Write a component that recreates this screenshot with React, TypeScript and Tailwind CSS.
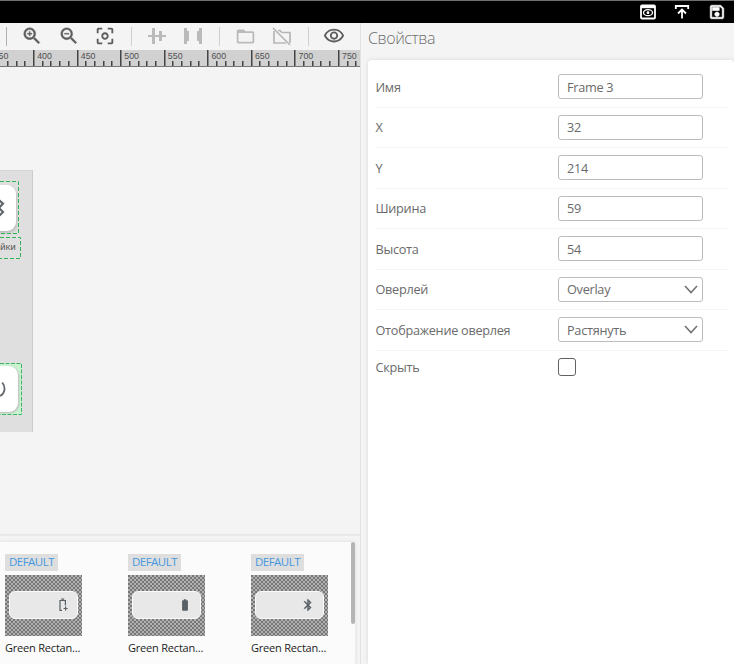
import React from 'react';
import { MdZoomIn, MdZoomOut, MdCenterFocusWeak, MdFolderOpen, MdOutlineVisibility, MdOutlineSave, MdBatteryFull, MdBluetooth } from 'react-icons/md';

const rulerMarks = [350, 400, 450, 500, 550, 600, 650, 700, 750];

function Ruler() {
  return (
    <svg className="block h-[17px] w-[360px] shrink-0 bg-[#d1d1d1]" viewBox="0 0 360 17">
      {rulerMarks.map((mark, i) => {
        const x = 34 + (i - 1) * 43.55;
        return (
          <g key={mark}>
            <rect x={Math.round(x) - 1} y="0" width="1.5" height="17" fill="#444" />
            {[1, 2, 3, 4].map((n) => (
              <rect key={n} x={Math.round(x + n * 8.7) - 1} y="11" width="1.5" height="6" fill="#444" />
            ))}
            <text x={x + 3.2} y="9" fontSize="8.8" fontFamily="Liberation Sans, Arial, sans-serif" fill="#505050">{mark}</text>
          </g>
        );
      })}
      <rect x="0" y="16" width="360" height="1" fill="#777" />
    </svg>
  );
}

function Separator() {
  return <div className="h-[19px] w-px shrink-0 bg-[#cfcfcf]" />;
}

function Toolbar() {
  return (
    <div className="flex h-[27px] shrink-0 items-center pb-px pl-[6px] text-[#5c5c5c]">
      <div className="h-[19px] w-px bg-[#b0b0b0]" />
      <MdZoomIn className="ml-[14px] size-[22px] stroke-current stroke-[0.5] [&>path:first-child]:stroke-none" />
      <MdZoomOut className="ml-[15px] size-[22px] stroke-current stroke-[0.4] [&>path:first-child]:stroke-none" />
      <MdCenterFocusWeak className="ml-[14px] size-[22px]" />
      <div className="w-[15px]" />
      <Separator />
      <svg className="ml-[15px] h-[18px] w-[20px]" viewBox="0 0 20 18" fill="#bababa">
        <path d="M1 8h18v2H1z" /><path d="M5 1h3v16H5zM12 4h3v10h-3z" />
      </svg>
      <svg className="ml-[16px] h-[18px] w-[20px]" viewBox="0 0 20 18" fill="#bababa">
        <path d="M1 1h3v3h2v10H4v3H1zM19 1h-3v3h-2v10h2v3h3z" />
      </svg>
      <div className="w-[16px]" />
      <Separator />
      <MdFolderOpen className="ml-[15px] size-[21px] text-[#bababa]" />
      <svg className="ml-[15px] size-[21px]" viewBox="0 0 21 21" fill="none" stroke="#b6b6b6" strokeWidth="1.7">
        <path d="M7 4.5h2l2 2h8V17M3 5v12h12M2 2l17 17" />
      </svg>
      <div className="w-[16px]" />
      <Separator />
      <MdOutlineVisibility className="ml-[14px] size-[22px]" />
    </div>
  );
}

function Canvas() {
  return (
    <div className="relative h-[467px] shrink-0 overflow-hidden">
      <div className="absolute top-[103px] left-0 h-[262px] w-[33px] border-t border-r border-t-[#d5d5d5] border-r-[#cbcbcb] bg-[#dfdfdf]">
        <div className="absolute top-[14px] -left-[30px] h-[46px] w-[46px] rounded-[9px] bg-white shadow-[1px_2px_3px_#bbb]" />
        <svg className="absolute top-[10px] left-0 h-[54px] w-[20px]" viewBox="0 0 20 54" fill="none">
          <path d="M0 .5h18.5v52H0" stroke="#32b35a" strokeDasharray="4 2" />
          <path d="M-1 19l4 3.6-4 4.4M-1 27l4 4-4 4" stroke="#62666b" strokeWidth="2.2" />
        </svg>
        <div className="absolute top-[69px] left-0 text-[9px] leading-[14px] text-[#555] font-['Noto_Sans','Open_Sans',sans-serif]">йки</div>
        <svg className="absolute top-[66px] left-0 h-[23px] w-[22px]" viewBox="0 0 22 23" fill="none">
          <path d="M0 .5h20.5v21H0" stroke="#32b35a" strokeDasharray="4 2" />
        </svg>
        <div className="absolute top-[193px] left-0 h-[51px] w-[22px] bg-[#c9f2d1]" />
        <div className="absolute top-[195px] -left-[30px] h-[46px] w-[48px] rounded-[9px] bg-white shadow-[1px_1px_2px_#bbb]" />
        <svg className="absolute top-[192px] left-0 h-[53px] w-[22px]" viewBox="0 0 22 53" fill="none">
          <path d="M0 .5h21.5v51H0" stroke="#3fb565" strokeDasharray="4 1.5" />
          <path d="M2.2 19.5C6 24 5 31 0 33" stroke="#62666b" strokeWidth="1.8" />
        </svg>
      </div>
    </div>
  );
}

function Asset({ kind }: { kind: 'charging' | 'battery' | 'bluetooth' }) {
  return (
    <div className="w-[123px] shrink-0">
      <div className="flex h-[17px] w-[53px] items-start justify-center bg-[#dedede] text-[11.5px] leading-[16px] tracking-[-0.5px] text-[#4599df] font-['Open_Sans','Noto_Sans',sans-serif]">DEFAULT</div>
      <div className="mt-[4px] flex h-[61px] w-[77px] items-center justify-center bg-[#777] bg-[conic-gradient(#b1b1b1_25%,#777_0_50%,#b1b1b1_0_75%,#777_0)] bg-[length:4px_4px] pb-[2px]">
        <div className="flex h-[28px] w-[69px] items-center justify-end rounded-[6px] border-[1.5px] border-[#fafafa] bg-[#e8e8e8] pr-[8px] text-[#596066]">
          {kind === 'charging' && (
            <svg className="mr-px h-[14px] w-[10px]" viewBox="0 0 10 14" fill="none" stroke="currentColor" strokeWidth="1.2">
              <path d="M4 12.4H2V2.5h5.4v5M3.2 1.2h3M7.6 8.5v4M5.6 10.5h4" />
            </svg>
          )}
          {kind === 'battery' && <MdBatteryFull className="size-[14px]" />}
          {kind === 'bluetooth' && <MdBluetooth className="size-[14px] stroke-current stroke-[0.6] [&>path:first-child]:stroke-none" />}
        </div>
      </div>
      <div className="mt-[4px] text-[11px] leading-[16px] tracking-[-0.2px] text-[#1c1c1c] font-['Open_Sans','Noto_Sans',sans-serif]">Green Rectan...</div>
    </div>
  );
}

function Field({ label, value, kind = 'input', last = false }: { label: string; value?: string; kind?: 'input' | 'select' | 'checkbox'; last?: boolean }) {
  return (
    <div className={last ? 'flex h-[33px] items-center' : 'flex h-[40.5px] items-center border-b border-[#f3f3f3]'}>
      <span className="w-[182.5px] shrink-0">{label}</span>
      {kind === 'checkbox' ? (
        <div className="size-[18px] rounded-[3px] border border-[#626262] bg-white" />
      ) : (
        <div className="flex h-[25px] w-[145px] items-center justify-between rounded-[3px] border border-[#bcbcbc] bg-white pr-[4px] pl-[8px]">
          <span>{value}</span>
          {kind === 'select' && (
            <svg className="h-[9px] w-[14px]" viewBox="0 0 14 9" fill="none" stroke="#737373" strokeWidth="1.6"><path d="M1 1l6 6.5L13 1" /></svg>
          )}
        </div>
      )}
    </div>
  );
}

export default function App() {
  return (
    <div className="flex h-[664px] w-[734px] flex-col overflow-hidden bg-[#f4f4f4] font-['Open_Sans','Noto_Sans',sans-serif]">
      <header className="flex h-[23px] shrink-0 items-center justify-end border-t border-[#707070] bg-black pr-[9px] text-white">
        <svg className="mr-[18px] size-[16px]" viewBox="0 0 16 16" fill="none" stroke="currentColor">
          <rect x="1" y="1.5" width="14" height="13" rx="1" strokeWidth="1.8" /><path d="M1 3h14" strokeWidth="2.4" />
          <ellipse cx="8" cy="8.7" rx="4.5" ry="3" strokeWidth="1.3" /><circle cx="8" cy="8.7" r="1.4" fill="currentColor" stroke="none" />
        </svg>
        <svg className="mr-[18px] size-[16px]" viewBox="0 0 16 16" fill="none" stroke="currentColor" strokeWidth="1.8">
          <path d="M1.8 5V2h12.4v3M8 14.5V6M4 9.5l4-4 4 4" />
        </svg>
        <MdOutlineSave className="-mr-px size-[18px] stroke-current stroke-[0.8] [&>path:first-child]:stroke-none" />
      </header>
      <div className="flex min-h-0 flex-1">
        <main className="flex w-[361px] shrink-0 flex-col border-r border-[#e2e2e2]">
          <Toolbar />
          <Ruler />
          <Canvas />
          <section className="flex min-h-0 flex-1 flex-col border-t-2 border-[#e9e9e9] pt-[6px]">
            <div className="flex min-h-0 w-[355px] flex-1 justify-between rounded-tr-[4px] bg-[#fbfbfb] shadow-[0_0_4px_#ddd]">
              <div className="flex w-[350px] overflow-hidden pt-[12px] pl-[5px]">
                <Asset kind="charging" />
                <Asset kind="battery" />
                <Asset kind="bluetooth" />
              </div>
              <div className="h-[82px] w-[4px] rounded-[2px] bg-[#b5b5b5]" />
            </div>
          </section>
        </main>
        <aside className="flex min-w-0 flex-1 flex-col pl-[7px]">
          <h2 className="h-[37px] pt-[4px] text-[16px] leading-[22px] font-light tracking-[-0.4px] text-[#6e6e6e]">Свойства</h2>
          <div className="w-[366px] flex-1 rounded-t-[4px] bg-white px-[7.5px] pt-[7px] text-[12.7px] leading-[18px] tracking-[-0.27px] text-[#6a6a6a] shadow-[0_0_4px_#d8d8d8]">
            <Field label="Имя" value="Frame 3" />
            <Field label="X" value="32" />
            <Field label="Y" value="214" />
            <Field label="Ширина" value="59" />
            <Field label="Высота" value="54" />
            <Field label="Оверлей" value="Overlay" kind="select" />
            <Field label="Отображение оверлея" value="Растянуть" kind="select" />
            <Field label="Скрыть" kind="checkbox" last />
          </div>
        </aside>
      </div>
    </div>
  );
}
